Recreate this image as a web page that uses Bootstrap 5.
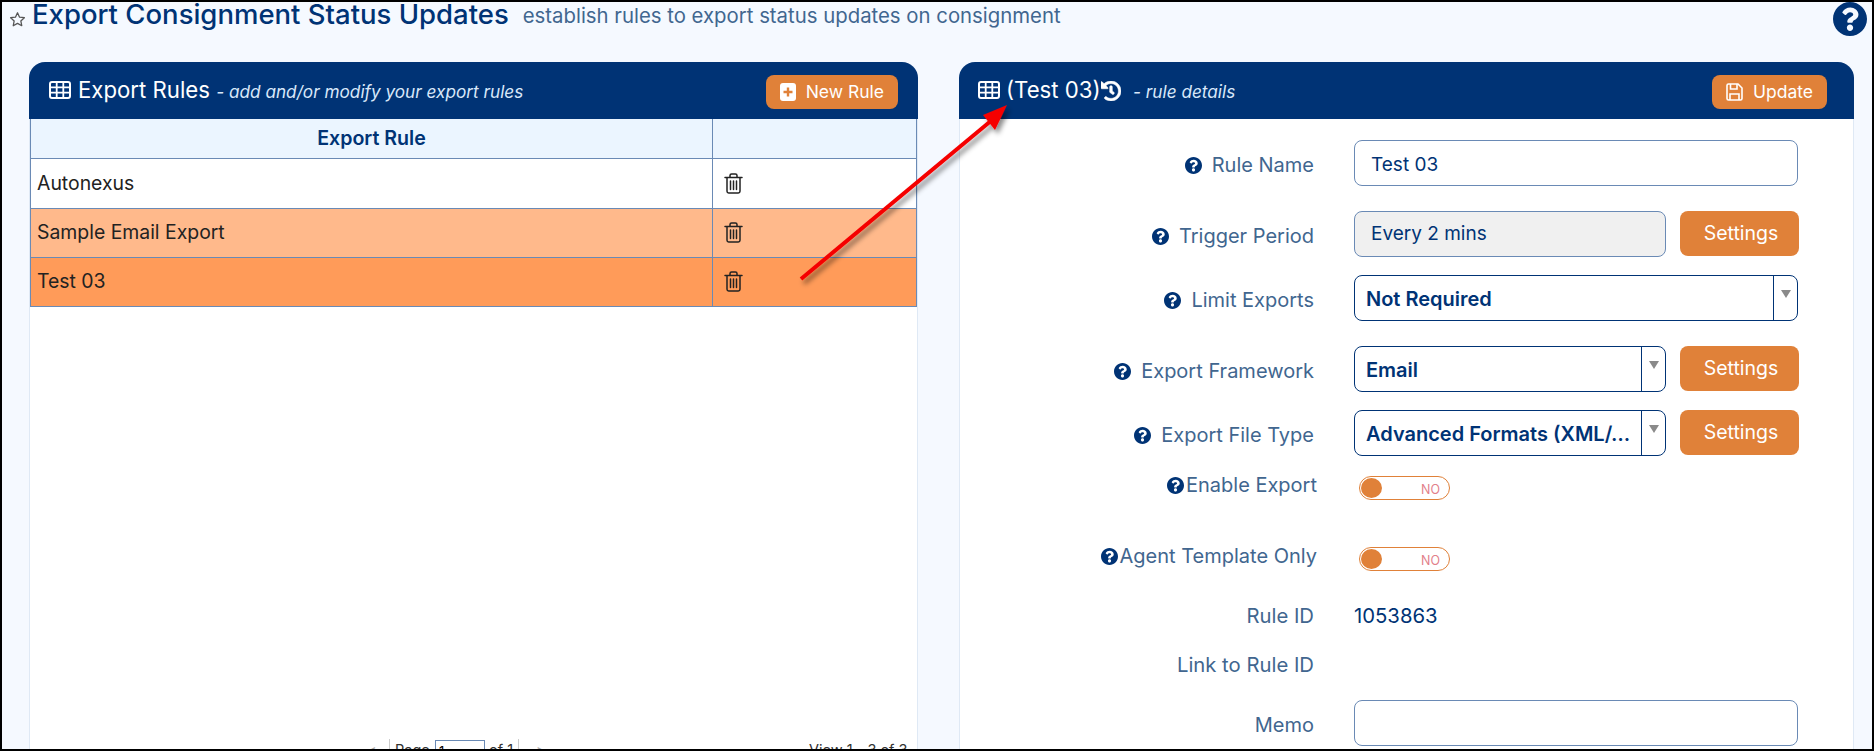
<!DOCTYPE html>
<html lang="en"><head><meta charset="utf-8"><title>Export Consignment Status Updates</title>
<link href="https://cdn.jsdelivr.net/npm/bootstrap@5.3.0/dist/css/bootstrap.min.css" rel="stylesheet">
<style>
html,body{height:751px;overflow:hidden;margin:0}
body{font-family:Inter,"Liberation Sans",sans-serif;background:#000}
.frame{position:relative;height:751px;border:2px solid #000;background:#f5f9ff;overflow:hidden;color:#003375}
.titlebar{height:60px;padding-left:7px;padding-right:0}
.star{width:17px;height:17px;margin-top:9px;margin-right:6px;flex:none}
.ttl{font-size:27.5px;font-weight:500;line-height:24px;margin:0;color:#003375}
.sub{font-size:20.35px;color:#41668f;line-height:24px;margin-left:14px;margin-top:2px}
.bighelp{width:34px;height:34px;margin-left:auto;margin-right:5px;margin-top:0;flex:none}
.panels{gap:41px;padding-left:27px;padding-right:18px}
.pl{width:889px;flex:none}.pr{width:895px;flex:none}
.phead{height:57px;background:#003375;border-radius:16px 16px 0 0;color:#fff;padding:13px 20px 0 20px}
.pr .phead{padding-right:27px;padding-left:19px}
.phead .hd{font-size:22.2px;line-height:24px;font-weight:400;margin-top:3px}
.phead em{font-size:17.2px;color:#d9e8fa}
.gicon{width:22px;height:18px;margin-right:7px;vertical-align:-1px}
.pr .gicon{margin-right:6px}
.obtn{background:#e08139;border:0;color:#fff;font-size:19.5px;border-radius:8px;line-height:1}
.obtn:hover{background:#e08139;color:#fff}
.hbtn{height:34px;padding:0 14px;margin-left:auto;display:flex;align-items:center;gap:10px;font-size:17.5px}
.pbody{background:#fff;border:1px solid #dfe9f5;border-top:0;height:640px;position:relative}
.rtab{table-layout:fixed;width:100%;margin:0;font-size:19.4px;border-collapse:collapse}
.rtab td,.rtab th{border:1px solid #6a8ab5;padding:0 6px;vertical-align:middle;background:transparent;box-shadow:none;color:#222}
.rtab th{background:#ebf5ff;color:#003375;text-align:center;font-weight:600;height:39px;font-size:19.6px;border-top:0}
.rtab td{height:49px}
.rtab .rowz td{height:50px;padding-top:1px}
.rtab .c1{width:682px}
.rowa td{background:#ffb98b}
.rowb td{background:#ff9b59}
.trash{width:19px;height:21px;margin-left:5px;display:block}
.pager{position:absolute;left:0;right:0;top:620px;height:26px;font-size:14.5px;color:#333}
.pg{position:absolute;top:0;line-height:22px;white-space:nowrap}
.pgin{position:absolute;left:405px;top:1px;width:50px;height:22px;border:1px solid #6a8ab5;background:#fff;padding-left:3px;font-size:13px}
.psep{position:absolute;top:0;height:24px;width:1px;background:#ccc}
.formbox{padding:21px 55px 0 0}
.frow{display:flex;gap:40px}
.lab{width:354px;flex:none;display:flex;justify-content:flex-end;align-items:center;gap:10px;font-size:20px;color:#41668f;padding-top:4px}
.lab svg,.tlab svg{width:17px;height:17px;flex:none}
.ctl{flex:1;display:flex;gap:14px;min-width:0}
.finp{height:46px;border:1px solid #6a8ab5;border-radius:8px;font-size:19px;color:#003375;padding:0 16px 2px;background:#fff;box-shadow:none}
.finp.lower{padding:3px 16px 0}
.finp[readonly],.finp:disabled{background:#f0f0f0;color:#003375}
.setb{width:119px;height:45px;flex:none;font-size:19.5px;padding-left:15px}
.fsel{height:46px;flex:1;min-width:0;display:flex;border:1.5px solid #003375;border-radius:8px;background:#fff;font-weight:600;font-size:20px;color:#003375}
.fseltxt{flex:1;min-width:0;padding:3px 7px 0 11px;line-height:40px;height:43px}
.fselarr{width:24px;flex:none;border-left:1.5px solid #003375;display:flex;justify-content:center;padding-top:14px}
.fselarr i{display:block;width:0;height:0;border:5px solid transparent;border-top:8px solid #8a8a8a;border-bottom:0}
.narrow{flex:0 0 312px}
.tlab{width:357px;flex:none;display:flex;justify-content:flex-end;gap:2px;font-size:20px;line-height:18px;color:#41668f;margin-right:-3px;align-items:center;align-self:flex-start}
.tog{margin-left:5px;width:91px;height:24px;border:1px solid #e08139;border-radius:12px;position:relative;background:#fff;font-size:12.5px;color:#e2808a;text-align:right;padding:4px 9px 0 0;line-height:17px}
.tog::before{content:"";position:absolute;left:1px;top:1px;width:21px;height:20px;border-radius:50%;background:#e08139}
.rtxt{font-size:20.3px;line-height:24px}
.ma{margin-bottom:25px}.mb18{margin-bottom:18px}.mc{margin-bottom:20px}.md{margin-bottom:47px}.me{margin-bottom:33px}.mf{margin-bottom:25px}.mg{margin-bottom:23px}
.arrow{position:absolute;left:0;top:0;width:1870px;height:747px;pointer-events:none}
</style></head><body>
<svg width="0" height="0" class="position-absolute"><defs>
<symbol id="q" viewBox="8 8 496 496"><path fill="#003375" d="M504 256c0 136.997-111.043 248-248 248S8 392.997 8 256C8 119.083 119.043 8 256 8s248 111.083 248 248zM262.655 90c-54.497 0-89.255 22.957-116.549 63.758-3.536 5.286-2.353 12.415 2.715 16.258l34.699 26.31c5.205 3.947 12.621 3.008 16.665-2.122 17.864-22.658 30.113-35.797 57.303-35.797 20.429 0 45.698 13.148 45.698 32.958 0 14.976-12.363 22.667-32.534 33.976C247.128 238.528 216 254.941 216 296v4c0 6.627 5.373 12 12 12h56c6.627 0 12-5.373 12-12v-1.333c0-28.462 83.186-29.647 83.186-106.667 0-58.002-60.165-102-116.531-102zM256 338c-25.365 0-46 20.635-46 46 0 25.364 20.635 46 46 46s46-20.636 46-46c0-25.365-20.635-46-46-46z"/></symbol>
<symbol id="grid" viewBox="0 0 22 18"><rect x="1" y="1" width="20" height="16" rx="2" fill="none" stroke="#fff" stroke-width="2"/><path d="M1 6.300h20M1 11.700h20M7.700 1v16M14.300 1v16" stroke="#fff" stroke-width="1.800"/></symbol>
<symbol id="bin" viewBox="0 0 19 21"><g fill="none" stroke="#222" stroke-width="1.500" stroke-linecap="round" stroke-linejoin="round"><path d="M1 4.500h17M6 4.500V2.600C6 1.700 6.700 1 7.600 1h3.800c.9 0 1.600.7 1.600 1.600v1.900M3 4.500v13.800C3 19.200 3.800 20 4.700 20h9.600c.9 0 1.700-.8 1.700-1.700V4.500"/><path d="M6.500 8v8.500M9.500 8v8.500M12.500 8v8.500"/></g></symbol>
</defs></svg>
<div class="frame">
  <div class="titlebar d-flex align-items-start">
    <svg class="star" viewBox="0 0 24 24"><path d="M12 2.500l2.900 6.200 6.800.8-5 4.600 1.300 6.700-6-3.300-6 3.300 1.300-6.700-5-4.600 6.800-.8z" fill="none" stroke="#555" stroke-width="1.800" stroke-linejoin="round"/></svg>
    <h1 class="ttl">Export Consignment Status Updates</h1>
    <span class="sub">establish rules to export status updates on consignment</span>
    <svg class="bighelp"><use href="#q"/></svg>
  </div>
  <div class="panels d-flex align-items-start">
    <section class="pl">
      <div class="phead d-flex">
        <div class="hd"><svg class="gicon"><use href="#grid"/></svg>Export Rules <em>- add and/or modify your export rules</em></div>
        <button class="btn obtn hbtn" type="button"><svg width="16" height="18" viewBox="0 0 16 18"><rect width="16" height="18" rx="3" fill="#fff"/><path d="M8 4.500v9M3.500 9h9" stroke="#e08139" stroke-width="2.400"/></svg>New Rule</button>
      </div>
      <div class="pbody">
        <table class="table rtab"><thead><tr><th class="c1">Export Rule</th><th></th></tr></thead>
        <tbody>
          <tr class="rowz"><td>Autonexus</td><td><svg class="trash"><use href="#bin"/></svg></td></tr>
          <tr class="rowa"><td>Sample Email Export</td><td><svg class="trash"><use href="#bin"/></svg></td></tr>
          <tr class="rowb"><td>Test 03</td><td><svg class="trash"><use href="#bin"/></svg></td></tr>
        </tbody></table>
        <div class="pager">
          <span class="pg" style="left:337px;color:#aaa">&lt;</span>
          <span class="psep" style="left:359px"></span>
          <span class="pg" style="left:365px">Page</span>
          <input class="pgin" value="1" aria-label="Page">
          <span class="pg" style="left:459px">of 1</span>
          <span class="psep" style="left:488px"></span>
          <span class="pg" style="left:506px;color:#aaa">&gt;</span>
          <span class="pg" style="left:779px">View 1 - 3 of 3</span>
        </div>
      </div>
    </section>
    <section class="pr">
      <div class="phead d-flex">
        <div class="hd"><svg class="gicon"><use href="#grid"/></svg>(Test 03)<svg width="20" height="20" viewBox="8 8 496 496" style="vertical-align:-3px"><path fill="#fff" stroke="#fff" stroke-width="14" d="M504 255.531c.253 136.64-111.18 248.372-247.82 248.468-59.015.042-113.223-20.53-155.822-54.911-11.077-8.94-11.905-25.541-1.839-35.607l11.267-11.267c8.609-8.609 22.353-9.551 31.891-1.984C173.062 425.135 212.781 440 256 440c101.705 0 184-82.311 184-184 0-101.705-82.311-184-184-184-48.814 0-93.149 18.969-126.068 49.932l50.754 50.754c10.08 10.08 2.941 27.314-11.313 27.314H24c-8.837 0-16-7.163-16-16V38.627c0-14.254 17.234-21.393 27.314-11.314l49.372 49.372C129.209 34.136 189.552 8 256 8c136.81 0 247.747 110.78 248 247.531zm-180.912 78.784l9.823-12.63c8.138-10.463 6.253-25.542-4.21-33.679L288 256.349V152c0-13.255-10.745-24-24-24h-16c-13.255 0-24 10.745-24 24v135.651l65.409 50.874c10.463 8.137 25.541 6.253 33.679-4.21z"/></svg> &nbsp;<em>- rule details</em></div>
        <button class="btn obtn hbtn" type="button"><svg width="17" height="18" viewBox="0 0 17 18" fill="none" stroke="#fff" stroke-width="1.600"><path d="M1 2.500C1 1.700 1.700 1 2.500 1H12l4 4v10.500c0 .8-.7 1.500-1.500 1.500h-12C1.700 17 1 16.300 1 15.500z"/><path d="M4.500 1v5h6.500V1M4 17v-6h9v6"/></svg>Update</button>
      </div>
      <div class="pbody formbox">
        <div class="frow ma"><div class="lab"><svg><use href="#q"/></svg>Rule Name</div><div class="ctl"><input class="form-control finp lower" value="Test 03" aria-label="Rule Name"></div></div>
        <div class="frow mb18"><div class="lab"><svg><use href="#q"/></svg>Trigger Period</div><div class="ctl"><input class="form-control finp narrow" value="Every 2 mins" readonly aria-label="Trigger Period"><button class="btn obtn setb" type="button">Settings</button></div></div>
        <div class="frow ma"><div class="lab"><svg><use href="#q"/></svg>Limit Exports</div><div class="ctl"><div class="fsel"><div class="fseltxt text-truncate">Not Required</div><div class="fselarr"><i></i></div></div></div></div>
        <div class="frow mb18"><div class="lab"><svg><use href="#q"/></svg>Export Framework</div><div class="ctl"><div class="fsel narrow"><div class="fseltxt text-truncate">Email</div><div class="fselarr"><i></i></div></div><button class="btn obtn setb" type="button">Settings</button></div></div>
        <div class="frow mc"><div class="lab"><svg><use href="#q"/></svg>Export File Type</div><div class="ctl"><div class="fsel narrow"><div class="fseltxt text-truncate">Advanced Formats (XML/JSON)</div><div class="fselarr"><i></i></div></div><button class="btn obtn setb" type="button">Settings</button></div></div>
        <div class="frow md"><div class="tlab"><svg><use href="#q"/></svg>Enable Export</div><div class="ctl"><div class="tog">NO</div></div></div>
        <div class="frow me"><div class="tlab"><svg><use href="#q"/></svg>Agent Template Only</div><div class="ctl"><div class="tog">NO</div></div></div>
        <div class="frow mf"><div class="lab rtxt p-0">Rule ID</div><div class="ctl rtxt">1053863</div></div>
        <div class="frow mg"><div class="lab rtxt p-0">Link to Rule ID</div><div class="ctl rtxt"></div></div>
        <div class="frow"><div class="lab"><span>Memo</span></div><div class="ctl"><input class="form-control finp" aria-label="Memo"></div></div>
      </div>
    </section>
  </div>
  <svg class="arrow" viewBox="0 0 1870 747">
    <defs><filter id="sh" x="-10%" y="-10%" width="125%" height="125%"><feDropShadow dx="3" dy="4" stdDeviation="2.500" flood-color="#000" flood-opacity=".45"/></filter></defs>
    <g filter="url(#sh)"><path d="M799 277L990 118" stroke="#f50000" stroke-width="4" fill="none"/><polygon points="1005,103 981,113 993,128" fill="#f50000"/></g>
  </svg>
</div>
</body></html>
